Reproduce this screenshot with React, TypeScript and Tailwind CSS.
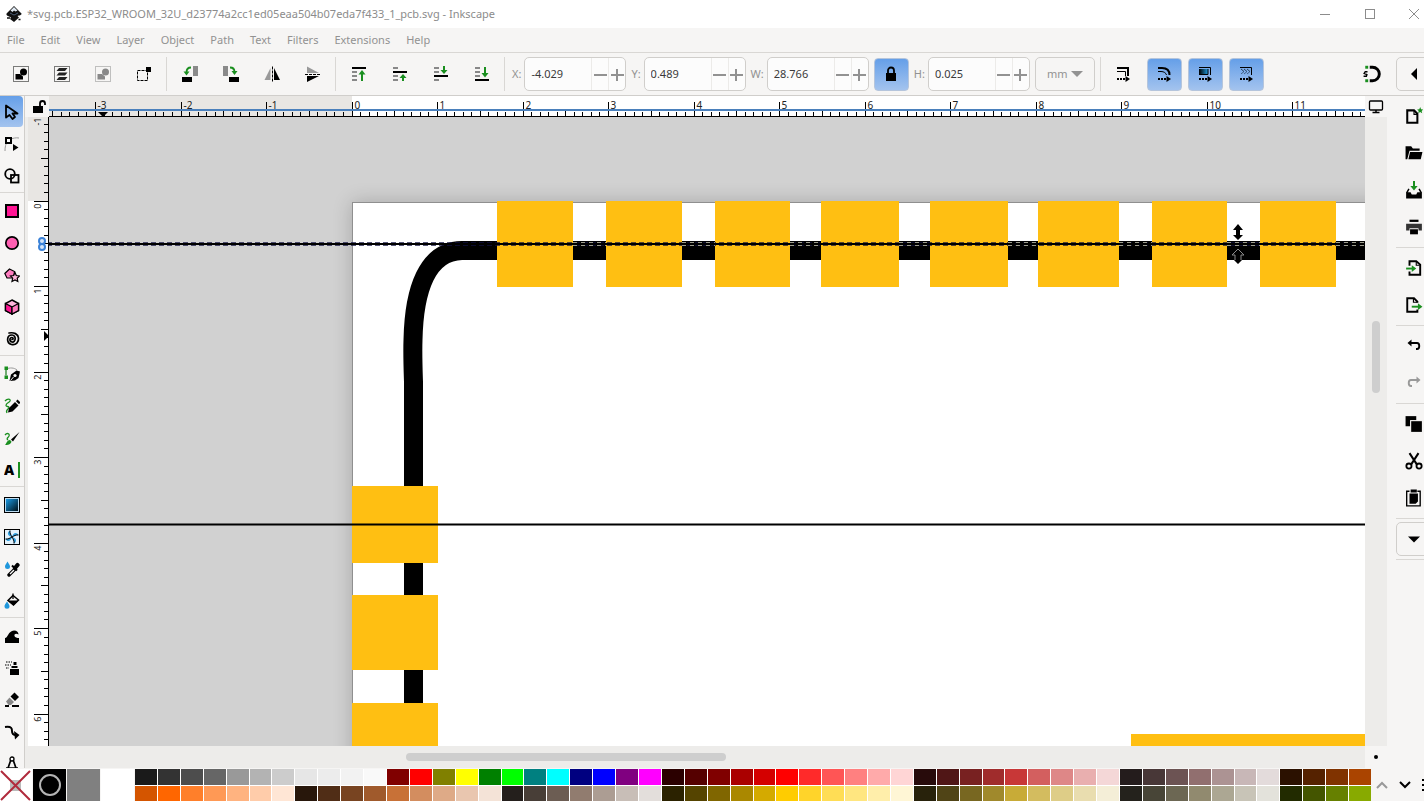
import type { ReactNode } from "react";
import clsx from "clsx";

const GREEN = "#1a8f1f";

function Icon({ children, size = 16 }: { children: ReactNode; size?: number }) {
  return (
    <svg
      width={size}
      height={size}
      viewBox="0 0 16 16"
      fill="none"
      className="shrink-0"
      aria-hidden="true"
    >
      {children}
    </svg>
  );
}

/* ---------- toolbar icons ---------- */

const dotted = (color: string) => (
  <rect x="0.5" y="0.5" width="15" height="15" stroke={color} strokeDasharray="1 1" />
);

const selectAll = (
  <Icon>
    {dotted("#000")}
    <circle cx="10.5" cy="6" r="3.5" fill="#000" />
    <path d="M2.5 8H7L10 10.5V13.5H2.5Z" fill="#000" />
  </Icon>
);

const selectLayers = (
  <Icon>
    {dotted("#000")}
    <path d="M5 2H13.500L11 5H2.500ZM5 6.500H13.500L11 9.500H2.500ZM5 11H13.500L11 14H2.500Z" fill="#222" />
  </Icon>
);

const deselect = (
  <Icon>
    {dotted("#888")}
    <circle cx="10.5" cy="6" r="3.500" fill="#888" />
    <path d="M2.5 8H7L10 10.5V13.5H2.5Z" fill="#888" />
  </Icon>
);

const selectTouch = (
  <Icon>
    <rect x="1.500" y="4.500" width="10" height="10" stroke="#000" strokeDasharray="3 1" />
    <rect x="10" y="1" width="5" height="5" fill="#000" />
  </Icon>
);

const rotateLeft = (
  <Icon>
    <rect x="11" y="0" width="5" height="10" fill="#8a8a8a" />
    <rect x="0" y="11" width="10" height="5" fill="#000" />
    <path d="M9 1.500C6 1.500 4.500 3.500 4.500 6.500" stroke={GREEN} strokeWidth="1.800" />
    <path d="M1.500 5.500H7.500L4.500 9.500Z" fill={GREEN} />
  </Icon>
);

const rotateRight = (
  <Icon>
    <rect x="0" y="0" width="5" height="10" fill="#8a8a8a" />
    <rect x="6" y="11" width="10" height="5" fill="#000" />
    <path d="M7 1.500C10 1.500 11.500 3.500 11.500 6" stroke={GREEN} strokeWidth="1.800" />
    <path d="M8.500 5H14.500L11.500 9Z" fill={GREEN} />
  </Icon>
);

const flipH = (
  <Icon>
    <path d="M6.500 2V14H0.500Z" fill="#999" />
    <path d="M10 2V14H16Z" fill="#000" />
    <path d="M8.500 0.500V16" stroke="#000" strokeDasharray="3 1" />
  </Icon>
);

const flipV = (
  <Icon>
    <path d="M2 0.500V7H14Z" fill="#999" />
    <path d="M2 16V10H14Z" fill="#000" />
    <path d="M0 8.500H16" stroke="#000" strokeDasharray="3 1" />
  </Icon>
);

const raiseTop = (
  <Icon>
    <path d="M1 2H15" stroke="#000" strokeWidth="2" />
    <path d="M1 6H6M1 10H6M1 14H6" stroke="#888" strokeWidth="2" />
    <path d="M11 15V7" stroke={GREEN} strokeWidth="2" />
    <path d="M7.500 8.500L11 4L14.500 8.500Z" fill={GREEN} />
  </Icon>
);

const raise = (
  <Icon>
    <path d="M1 2H6M1 10H6M1 14H6" stroke="#888" strokeWidth="2" />
    <path d="M1 6H15" stroke="#000" strokeWidth="2" />
    <path d="M11 15V11" stroke={GREEN} strokeWidth="2" />
    <path d="M7.500 12L11 8L14.500 12Z" fill={GREEN} />
  </Icon>
);

const lower = (
  <Icon>
    <path d="M1 2H6M1 6H6M1 14H6" stroke="#888" strokeWidth="2" />
    <path d="M1 10H15" stroke="#000" strokeWidth="2" />
    <path d="M11 0V5" stroke={GREEN} strokeWidth="2" />
    <path d="M7.500 4L11 8L14.500 4Z" fill={GREEN} />
  </Icon>
);

const lowerBottom = (
  <Icon>
    <path d="M1 2H6M1 6H6M1 10H6" stroke="#888" strokeWidth="2" />
    <path d="M1 14H15" stroke="#000" strokeWidth="2" />
    <path d="M11 1V8" stroke={GREEN} strokeWidth="2" />
    <path d="M7.500 7L11 11.500L14.500 7Z" fill={GREEN} />
  </Icon>
);

const dottedArrow = (
  <>
    <path d="M2 13H11" stroke="#000" strokeWidth="2" strokeDasharray="2 1" />
    <path d="M10.500 10L15 13L10.500 16Z" fill="#000" />
  </>
);

const scaleStroke = (
  <Icon>
    <path d="M2 2H13V10" stroke="#000" strokeWidth="2" />
    <path d="M2 5.500H10.500V10" stroke="#000" />
    {dottedArrow}
  </Icon>
);

const scaleCorners = (
  <Icon>
    <path d="M2 2H6C11 2 13.500 5 13.500 9" stroke="#000" strokeWidth="2" />
    <path d="M2 5.500H5C8 5.500 10 7 10.500 9" stroke="#000" />
    {dottedArrow}
  </Icon>
);

const moveGradient = (
  <Icon>
    <defs>
      <linearGradient id="grad-h">
        <stop offset="0" stopColor="#000" />
        <stop offset="1" stopColor="#1d9be0" />
      </linearGradient>
    </defs>
    <rect x="2" y="3" width="9" height="5" fill="url(#grad-h)" />
    <path d="M2 1.500H13.500V9M2 8.500H11V3" stroke="#000" />
    {dottedArrow}
  </Icon>
);

const movePattern = (
  <Icon>
    <path d="M2 1.500H13.500V9" stroke="#000" />
    <path d="M3 3L6 5.500L3 8M6 3L9 5.500L6 8M9 3L12 5.500L9 8" stroke="#123" strokeDasharray="1 0.500" />
    {dottedArrow}
  </Icon>
);

const lockClosed = (
  <Icon>
    <path d="M5 7V4.500A3 3 0 0 1 11 4.500V7" stroke="#000" strokeWidth="1.800" />
    <rect x="3" y="7" width="10" height="8" fill="#000" />
  </Icon>
);

const snapMagnet = (
  <Icon size={18}>
    <path d="M6 2H8.500A6 6 0 0 1 8.500 14H6" stroke="#000" strokeWidth="2.600" />
    <rect x="2" y="0.700" width="2.600" height="2.600" fill={GREEN} />
    <rect x="2" y="12.700" width="2.600" height="2.600" fill={GREEN} />
    <path d="M4 6H2L1 7.500L3.500 8.500L3 10H0.500" stroke="#000" strokeWidth="1.200" />
  </Icon>
);

/* ---------- toolbox icons ---------- */

const selector = (
  <Icon>
    <path d="M2 1.500V13.500L5.500 11L8.500 15L11 13L8.500 9.500H13.500Z" stroke="#000" strokeWidth="1.800" strokeLinejoin="round" />
  </Icon>
);

const nodeEdit = (
  <Icon>
    <path d="M4 4C1.500 8 1 11 1 15M4 4C9 2 12 1.500 15 2" stroke="#999" />
    <rect x="2" y="2" width="5" height="5" fill="#fff" stroke="#000" strokeWidth="2" />
    <path d="M9 8L14.500 11.500L9 15Z" fill="#000" />
  </Icon>
);

const shapeBuilder = (
  <Icon>
    <circle cx="6" cy="6" r="4.800" stroke="#000" strokeWidth="1.800" />
    <rect x="7" y="7" width="7.500" height="7.500" stroke="#000" strokeWidth="1.800" />
  </Icon>
);

const rectTool = (
  <Icon>
    <rect x="2" y="2" width="12" height="12" fill="#ff1493" stroke="#000" strokeWidth="2" />
  </Icon>
);

const ellipseTool = (
  <Icon>
    <circle cx="8" cy="8" r="6.200" fill="#ff5fb2" stroke="#000" strokeWidth="1.700" />
  </Icon>
);

const starTool = (
  <Icon>
    <path d="M5.500 2L10.500 4.500L9.500 11H3L0.800 6.500Z" fill="#ff7dc0" stroke="#000" strokeWidth="1.200" />
    <path
      d="M11 5.500L12.300 8.500L15.500 9L13.200 11.200L13.800 14.500L11 13L8 14.500L8.700 11.200L6.500 9L9.700 8.500Z"
      fill="#ffb5dc"
      stroke="#000"
      strokeWidth="1.200"
    />
  </Icon>
);

const boxTool = (
  <Icon>
    <path d="M8 1L14.500 4.500V11.500L8 15L1.500 11.500V4.500Z" fill="#ffb5dc" stroke="#000" strokeWidth="1.500" />
    <path d="M1.500 4.500L8 8V15L1.500 11.500Z" fill="#ff1493" stroke="#000" strokeWidth="1.300" />
    <path d="M8 8L14.500 4.500V11.500L8 15Z" fill="#ff7dc0" stroke="#000" strokeWidth="1.300" />
  </Icon>
);

const spiralTool = (
  <Icon>
    <path
      d="M8 8.500C9.500 8.500 9.500 6.500 8 6.500C5.500 6.500 5 10.500 8 11C12 11.500 12.500 4 8 4C2.500 4 2 12 7.500 13.500C12 14.500 15 11 14.500 7C14 3 10 1 5 2"
      stroke="#000"
      strokeWidth="1.700"
      strokeLinecap="round"
    />
  </Icon>
);

const penTool = (
  <Icon>
    <path d="M2 12V3C6 1.500 10 1.500 13 4" stroke="#999" />
    <rect x="0.500" y="0.500" width="3.500" height="3.500" fill={GREEN} />
    <rect x="0.500" y="9.500" width="3.500" height="3.500" fill={GREEN} />
    <path d="M2 4V9" stroke={GREEN} />
    <path d="M5.500 15L7 8.500L12.500 4.500L16 5.500L14.500 12L11 14.500Z" fill="#000" />
    <path d="M6.500 14.500L9.500 11" stroke="#f6f5f4" />
    <circle cx="11" cy="9.500" r="1.600" fill="#f6f5f4" />
  </Icon>
);

const pencilTool = (
  <Icon>
    <path d="M1 3C3 0.500 7 0.500 6 3C5 5 2 5 2 7.500C2 9 5 8 5 9.500C5 11 1 12 3 15" stroke={GREEN} strokeWidth="1.300" />
    <path d="M4 14.500L5 10L11 4L14.500 7.500L8.500 13.500Z" fill="#000" />
    <path d="M12 3.300L13.500 1.500L16.500 4.500L15 6.300Z" fill="#000" />
  </Icon>
);

const brushTool = (
  <Icon>
    <path d="M1 5C3 2.500 6 3.500 5 6C4 8 2 8.500 4 10" stroke={GREEN} strokeWidth="1.300" />
    <path d="M1 15C2.500 14 2.500 10.500 6 10L7.500 11.500C7 14.500 3.500 15 1 15Z" fill={GREEN} />
    <path d="M7 9.500L15.500 2L9 11.500Z" fill="#000" />
  </Icon>
);

const textTool = (
  <Icon>
    <text x="0" y="13" fill="#000" fontFamily="Open Sans, sans-serif" fontWeight="800" fontSize="14">
      A
    </text>
    <path d="M15 0V16" stroke={GREEN} strokeWidth="2" />
  </Icon>
);

const gradientTool = (
  <Icon>
    <defs>
      <linearGradient id="grad-d" x1="0" y1="0" x2="1" y2="1">
        <stop offset="0" stopColor="#1a9be6" />
        <stop offset="1" stopColor="#001018" />
      </linearGradient>
    </defs>
    <rect x="0.500" y="0.500" width="15" height="15" fill="#bcdcf2" stroke="#000" />
    <rect x="2" y="2" width="12" height="12" fill="url(#grad-d)" />
  </Icon>
);

const meshTool = (
  <Icon>
    <rect x="0.500" y="0.500" width="15" height="15" fill="#e3f2fc" stroke="#000" />
    <path d="M8 8C3 7 3 3 6 1.500C6 4 7 6 8 8C9 3 13 3 14.500 6C12 6 10 7 8 8C13 9 13 13 10 14.500C10 12 9 10 8 8C7 13 3 13 1.500 10C4 10 6 9 8 8Z" fill="#2f9fdf" />
    <path d="M6 1.500C5.500 4 7 6 8 8M14.500 6C12 5.500 10 7 8 8M10 14.500C10.500 12 9 10 8 8M1.500 10C4 10.500 6 9 8 8" stroke="#000" />
  </Icon>
);

const dropperTool = (
  <Icon>
    <path d="M3.500 0.500C5 3 6 4 6 5.500A2.500 2.500 0 0 1 1 5.500C1 4 2 3 3.500 0.500Z" fill="#1f97dc" />
    <path d="M5 14L11 8" stroke="#000" strokeWidth="3.400" strokeLinecap="round" />
    <path d="M6 13L10 9" stroke="#fff" strokeWidth="1.200" />
    <path d="M8 4.500L13 9.500" stroke="#000" strokeWidth="2" />
    <path d="M11 7L13.500 4" stroke="#000" strokeWidth="4.200" strokeLinecap="round" />
  </Icon>
);

const bucketTool = (
  <Icon>
    <path d="M3 8.500C4.500 11 5.500 12 5.500 13.200A2.500 2.500 0 0 1 0.500 13.200C0.500 12 1.500 11 3 8.500Z" fill="#1f97dc" />
    <path d="M4 7.500L9 2.500L14.500 7L9.500 12Z" stroke="#000" strokeWidth="1.500" />
    <path d="M4 7.500H14.500L9.500 12.500Z" fill="#000" />
    <path d="M9 6V0.500" stroke="#000" strokeWidth="1.300" />
  </Icon>
);

const tweakTool = (
  <Icon>
    <path d="M1 15V10C4 10 4 3 10 2.500C13 2.500 14.500 4.500 14.500 6.500C12.500 5 10 5.500 10.500 8C11 9.500 13 10 15 10V15Z" fill="#000" />
  </Icon>
);

const sprayTool = (
  <Icon>
    <path d="M2 2H8M1 5H7M2 8H5" stroke="#777" strokeWidth="2" strokeDasharray="1.500 1" />
    <path d="M6 9H15V15H6Z" fill="#000" />
    <path d="M7.500 6H13.500V8H7.500ZM9.500 2H12.500V5H9.500Z" fill="#000" />
  </Icon>
);

const eraserTool = (
  <Icon>
    <path d="M6.500 4.500L10.500 0.500L15 5L11 9Z" fill="#000" />
    <path d="M5.500 5.500L10 10L7 13H4.500L2 9.500Z" fill="#888" />
    <path d="M1 14H5M8 14H15" stroke="#000" strokeWidth="2" />
  </Icon>
);

const connectorTool = (
  <Icon>
    <path d="M1 3C8 2 8 5 8 7C8 10 9 11 12 11" stroke="#000" strokeWidth="2" />
    <path d="M10 7L15.500 11L11 15.500Z" fill="#000" />
  </Icon>
);

const measureTool = (
  <Icon>
    <path d="M3 15L7 3.500H9L13 15M2 12H14" stroke="#000" strokeWidth="1.700" />
    <circle cx="8" cy="3" r="2" fill="#fff" stroke="#000" strokeWidth="1.300" />
  </Icon>
);

/* ---------- command bar icons ---------- */

const docNew = (
  <Icon size={18}>
    <path d="M2 3H8L11 6V14H2Z" stroke="#000" strokeWidth="1.800" />
    <path d="M8 3V6.500H11" stroke="#000" />
    <path d="M13.500 0L14.300 2L16.300 2.200L14.800 3.600L15.300 5.600L13.500 4.500L11.700 5.600L12.200 3.600L10.700 2.200L12.700 2Z" fill={GREEN} />
  </Icon>
);

const docOpen = (
  <Icon size={18}>
    <path d="M0.500 2H5.500L7 4H13V6H4L2 13.500H0.500Z" fill="#000" />
    <path d="M4.500 7H15.500L14 13.500H3Z" fill="#000" />
  </Icon>
);

const docSave = (
  <Icon size={18}>
    <path d="M8 0V5" stroke={GREEN} strokeWidth="1.800" />
    <path d="M4.800 4.500H11.200L8 8.500Z" fill={GREEN} />
    <path d="M3.500 7L1.500 10.500M12.500 7L14.500 10.500" stroke="#000" strokeWidth="1.300" />
    <path d="M1 10H5L6 12H10L11 10H15V15.500H1Z" fill="#000" />
  </Icon>
);

const docPrint = (
  <Icon size={18}>
    <path d="M4 1.500H12V3.500H4Z" fill="#000" />
    <path d="M1 5H15V11H12V9H4V11H1Z" fill="#333" />
    <path d="M4.500 10H11.500V14.500H4.500Z" fill="#000" />
  </Icon>
);

const docImport = (
  <Icon size={18}>
    <path d="M4 6V2H10L13.500 5V14H4V11" stroke="#000" strokeWidth="1.700" />
    <path d="M10 2V5.500H13" stroke="#000" />
    <path d="M1 8.500H7" stroke={GREEN} strokeWidth="1.700" />
    <path d="M6 5.500L10 8.500L6 11.500Z" fill={GREEN} />
  </Icon>
);

const docExport = (
  <Icon size={18}>
    <path d="M11 6V5L8 2H2V14H11V12" stroke="#000" strokeWidth="1.700" />
    <path d="M7.500 2V5.500H11" stroke="#000" />
    <path d="M6 9.500H12" stroke={GREEN} strokeWidth="1.700" />
    <path d="M11.500 6.500L15.500 9.500L11.500 12.500Z" fill={GREEN} />
  </Icon>
);

const undo = (
  <Icon>
    <path d="M4 5H11C14 5 14 11 11 11H10" stroke="#000" strokeWidth="1.900" />
    <path d="M5.500 1.500V8.500L1.500 5Z" fill="#000" />
  </Icon>
);

const redo = (
  <Icon>
    <path d="M12 5H5C2 5 2 11 5 11H6" stroke="#999" strokeWidth="1.900" />
    <path d="M10.500 1.500V8.500L14.500 5Z" fill="#999" />
  </Icon>
);

const copy = (
  <Icon size={18}>
    <path d="M0.500 1H10V10H0.500Z" fill="#000" />
    <rect x="5" y="5" width="10.500" height="10.500" fill="#000" stroke="#f6f5f4" />
  </Icon>
);

const cut = (
  <Icon size={18}>
    <path d="M4 1L10.500 11M12 1L5.500 11" stroke="#000" strokeWidth="1.800" />
    <circle cx="3.500" cy="12.500" r="2.300" stroke="#000" strokeWidth="1.600" />
    <circle cx="12.500" cy="12.500" r="2.300" stroke="#000" strokeWidth="1.600" />
  </Icon>
);

const paste = (
  <Icon size={18}>
    <path d="M4 2H1.500V15H13.500V2H11" stroke="#000" strokeWidth="1.200" />
    <path d="M5 0.500H10.500V3H5ZM4 4H11.500V11L9.500 13H4Z" fill="#000" />
  </Icon>
);

const caretDown = (
  <Icon>
    <path d="M2 5.500H14L8 11.500Z" fill="#000" />
  </Icon>
);

/* ---------- data ---------- */

const menus = ["File", "Edit", "View", "Layer", "Object", "Path", "Text", "Filters", "Extensions", "Help"];

type Item = { label: string; icon: ReactNode; active?: boolean };

const selectGroups: Item[][] = [
  [
    { label: "Select all", icon: selectAll },
    { label: "Select all in all layers", icon: selectLayers },
    { label: "Deselect", icon: deselect },
    { label: "Touch selection", icon: selectTouch },
  ],
  [
    { label: "Rotate left", icon: rotateLeft },
    { label: "Rotate right", icon: rotateRight },
    { label: "Flip horizontal", icon: flipH },
    { label: "Flip vertical", icon: flipV },
  ],
  [
    { label: "Raise to top", icon: raiseTop },
    { label: "Raise", icon: raise },
    { label: "Lower", icon: lower },
    { label: "Lower to bottom", icon: lowerBottom },
  ],
];

const scaleOptions: Item[] = [
  { label: "Scale stroke width", icon: scaleStroke },
  { label: "Scale rounded corners", icon: scaleCorners, active: true },
  { label: "Move gradients", icon: moveGradient, active: true },
  { label: "Move patterns", icon: movePattern, active: true },
];

const toolGroups: Item[][] = [
  [
    { label: "Selector", icon: selector, active: true },
    { label: "Node", icon: nodeEdit },
    { label: "Shape builder", icon: shapeBuilder },
  ],
  [
    { label: "Rectangle", icon: rectTool },
    { label: "Ellipse", icon: ellipseTool },
    { label: "Star", icon: starTool },
    { label: "3D box", icon: boxTool },
    { label: "Spiral", icon: spiralTool },
  ],
  [
    { label: "Pen", icon: penTool },
    { label: "Pencil", icon: pencilTool },
    { label: "Calligraphy", icon: brushTool },
    { label: "Text", icon: textTool },
  ],
  [
    { label: "Gradient", icon: gradientTool },
    { label: "Mesh", icon: meshTool },
    { label: "Dropper", icon: dropperTool },
    { label: "Paint bucket", icon: bucketTool },
  ],
  [
    { label: "Tweak", icon: tweakTool },
    { label: "Spray", icon: sprayTool },
    { label: "Eraser", icon: eraserTool },
    { label: "Connector", icon: connectorTool },
    { label: "Measure", icon: measureTool },
  ],
];

const commandGroups: Item[][] = [
  [
    { label: "New", icon: docNew },
    { label: "Open", icon: docOpen },
    { label: "Save", icon: docSave },
    { label: "Print", icon: docPrint },
  ],
  [
    { label: "Import", icon: docImport },
    { label: "Export", icon: docExport },
  ],
  [
    { label: "Undo", icon: undo },
    { label: "Redo", icon: redo },
  ],
  [
    { label: "Copy", icon: copy },
    { label: "Cut", icon: cut },
    { label: "Paste", icon: paste },
  ],
];

const swatches = [
  "#1a1a1a #333333 #4d4d4d #666666 #999999 #b3b3b3 #cccccc #e6e6e6 #ececec #f2f2f2 #f9f9f9",
  "#800000 #ff0000 #808000 #ffff00 #008000 #00ff00 #008080 #00ffff #000080 #0000ff #800080 #ff00ff",
  "#2b0000 #550000 #800000 #aa0000 #d40000 #ff0000 #ff2a2a #ff5555 #ff8080 #ffaaaa #ffd5d5",
  "#280b0b #501616 #782121 #a02c2c #c83737 #d35f5f #de8787 #e9afaf #f4d7d7",
  "#241c1c #483737 #6c5353 #916f6f #ac9393 #c8b7b7 #e3dbdb",
  "#2b1100 #552200 #803300 #aa4400 #d45500 #ff6600 #ff7f2a #ff9955 #ffb380 #ffccaa #ffe6d5",
  "#28170b #502d16 #784421 #a05a2c #c87137 #d38d5f #deaa87 #e9c6af #f4e3d7",
  "#241f1c #483e37 #6c5d53 #917c6f #ac9d93 #c8beb7 #e3dedb",
  "#2b2200 #554400 #806600 #aa8800 #d4aa00 #ffcc00 #ffd42a #ffdd55 #ffe680 #ffeeaa #fff6d5",
  "#28220b #504416 #786721 #a0892c #c8ab37 #d3bc5f #decd87 #e9ddaf #f4eed7",
  "#24221c #484537 #6c6753 #918a6f #aca793 #c8c4b7 #e3e2db",
  "#222b00 #445500 #668000 #88aa00",
]
  .join(" ")
  .split(" ");

/* ---------- title bar and menus ---------- */

function TitleBar() {
  return (
    <header className="flex h-7 shrink-0 items-center bg-white pl-[6px] text-[#8c8c8c]">
      <svg width="16" height="18" viewBox="0 0 16 18" aria-hidden="true">
        <path d="M8 1L15.500 8.500C16 10 13 10.500 11.500 11L13 12.500L8 17L4 14L5 12.500L1 10.500C0 9.500 0.500 8.500 1 8Z" fill="#111" />
        <path d="M8 2L11.500 5.500L9.500 6.500L8 5.500L6.500 7L4.500 5.500Z" fill="#dfe8f2" />
        <path d="M4 8L8 10L12 8" stroke="#4a5b74" />
        <path d="M1 13H4M12.500 14.500H14.500" stroke="#111" strokeWidth="1.500" />
      </svg>
      <h1 className="ml-[5px]">*svg.pcb.ESP32_WROOM_32U_d23774a2cc1ed05eaa504b07eda7f433_1_pcb.svg - Inkscape</h1>
      <div className="ml-auto flex items-center">
        <button aria-label="Minimize" className="flex h-7 w-[45px] items-center justify-center">
          <svg width="10" height="10" stroke="#8c8c8c" fill="none">
            <path d="M0 5.500H10" />
          </svg>
        </button>
        <button aria-label="Maximize" className="flex h-7 w-[45px] items-center justify-center">
          <svg width="10" height="10" stroke="#8c8c8c" fill="none">
            <rect x="0.500" y="0.500" width="9" height="9" />
          </svg>
        </button>
        <button aria-label="Close" className="flex h-7 w-8 items-center justify-center pl-3">
          <svg width="10" height="10" stroke="#8c8c8c" fill="none">
            <path d="M0 0L10 10M10 0L0 10" />
          </svg>
        </button>
      </div>
    </header>
  );
}

function MenuBar() {
  return (
    <nav className="flex h-[25px] shrink-0 items-center gap-4 border-b border-[#d9d7d4] pt-px pl-[7px] text-[#929292]">
      {menus.map((m) => (
        <button key={m}>{m}</button>
      ))}
    </nav>
  );
}

/* ---------- tool controls ---------- */

function ToolButton({ item }: { item: Item }) {
  return (
    <button
      aria-label={item.label}
      className={clsx(
        "flex h-[33px] w-[35px] shrink-0 items-center justify-center rounded",
        item.active && "border border-[#b5c5dc] bg-linear-to-b from-[#659fe8] to-[#a3c3ee]",
      )}
    >
      {item.icon}
    </button>
  );
}

function Separator() {
  return <div className="h-[34px] w-px shrink-0 bg-[#d9d7d4]" />;
}

function SpinBox({ id, label, value }: { id: string; label: string; value: string }) {
  return (
    <div className="flex items-center gap-[3px]">
      <label htmlFor={id} className="text-[#929292]">
        {label}
      </label>
      <div className="flex h-[34px] w-[102px] overflow-hidden rounded-[5px] border border-[#d0cecb] bg-[#fcfcfc]">
        <input
          id={id}
          defaultValue={value}
          className="w-0 min-w-0 flex-1 bg-transparent pl-[6px] text-[#3a3a3a] outline-none"
        />
        <button aria-label={`Decrease ${label}`} className="flex w-[17px] items-center justify-center border-l border-[#ecebe9]">
          <svg width="13" height="13" stroke="#929292" strokeWidth="2">
            <path d="M0 7H13" />
          </svg>
        </button>
        <button aria-label={`Increase ${label}`} className="flex w-[17px] items-center justify-center border-l border-[#ecebe9]">
          <svg width="13" height="13" stroke="#929292" strokeWidth="2">
            <path d="M0 7H13M6 1V13" />
          </svg>
        </button>
      </div>
    </div>
  );
}

function ToolControls() {
  return (
    <div className="flex h-[43px] shrink-0 items-center overflow-hidden border-b border-[#d0cecb] pl-[3px]">
      <div className="flex items-center gap-[5px]">
        {selectGroups.map((group, i) => (
          <div key={i} className="flex items-center gap-[5px]">
            <div className="flex gap-[6px]">
              {group.map((item) => (
                <ToolButton key={item.label} item={item} />
              ))}
            </div>
            <Separator />
          </div>
        ))}
        <div className="flex items-center gap-[5px] pl-[2px]">
          <SpinBox id="pos-x" label="X:" value="-4.029" />
          <SpinBox id="pos-y" label="Y:" value="0.489" />
          <SpinBox id="size-w" label="W:" value="28.766" />
          <ToolButton item={{ label: "Lock width and height", icon: lockClosed, active: true }} />
          <SpinBox id="size-h" label="H:" value="0.025" />
        </div>
        <div className="relative">
          <select
            aria-label="Unit"
            className="h-[34px] w-[60px] appearance-none rounded-[5px] border border-[#d0cecb] pl-[11px] text-[#929292]"
          >
            <option>mm</option>
            <option>px</option>
          </select>
          <svg width="12" height="6" className="pointer-events-none absolute top-[14px] right-3" fill="#929292">
            <path d="M0 0H12L6 6Z" />
          </svg>
        </div>
        <Separator />
        <div className="flex gap-[6px]">
          {scaleOptions.map((item) => (
            <ToolButton key={item.label} item={item} />
          ))}
        </div>
      </div>
      <div className="ml-auto flex w-[70px] shrink-0 items-center gap-[7px]">
        <ToolButton item={{ label: "Snapping", icon: snapMagnet }} />
        <button
          aria-label="Show snap options"
          className="flex h-[34px] w-9 shrink-0 items-center justify-center rounded-[5px] border border-[#d0cecb]"
        >
          <Icon>
            <path d="M11 2V14L5 8Z" fill="#000" />
          </Icon>
        </button>
      </div>
    </div>
  );
}

function Toolbox() {
  return (
    <aside className="flex w-[25px] shrink-0 flex-col gap-px overflow-hidden border-r border-[#d0cecb]">
      {toolGroups.map((group, i) => (
        <div key={i} className="flex shrink-0 flex-col gap-px">
          {i > 0 && <div className="h-[2px] w-full border-t border-[#d9d7d4]" />}
          {group.map((item) => (
            <button
              key={item.label}
              aria-label={item.label}
              className={clsx(
                "flex h-[31px] w-[23px] shrink-0 items-center justify-center rounded-r",
                item.active && "bg-linear-to-b from-[#659fe8] to-[#a3c3ee]",
              )}
            >
              {item.icon}
            </button>
          ))}
        </div>
      ))}
    </aside>
  );
}

function CommandBar() {
  return (
    <aside className="flex w-[37px] shrink-0 flex-col gap-[3px] overflow-hidden pt-[3px] pl-[9px]">
      {commandGroups.map((group, i) => (
        <div key={i} className="flex flex-col gap-[3px]">
          {group.map((item) => (
            <button
              key={item.label}
              aria-label={item.label}
              className="flex h-[34px] w-9 shrink-0 items-center justify-center"
            >
              {item.icon}
            </button>
          ))}
          <div className="h-px w-9 bg-[#d9d7d4]" />
        </div>
      ))}
      <button
        aria-label="More commands"
        className="flex h-[34px] w-9 shrink-0 items-center justify-center rounded-[5px] border border-[#d0cecb]"
      >
        {caretDown}
      </button>
      <div className="h-px w-9 bg-[#d9d7d4]" />
    </aside>
  );
}

/* ---------- rulers ---------- */

const STEP = 85.5;
const ORIGIN_X = 303;
const ORIGIN_Y = 84;

function ticks(origin: number, from: number, to: number) {
  const out: { pos: number; n: number }[] = [];
  for (let n = from; n <= to; n++) {
    out.push({ pos: Math.floor(origin + (n * STEP) / 10) + 0.5, n });
  }
  return out;
}

function HorizontalRuler() {
  return (
    <svg className="h-full w-full bg-white" fontFamily="Noto Sans, sans-serif" fontSize="10">
      <rect width={ORIGIN_X} height="21" fill="#e8e6e3" />
      {ticks(ORIGIN_X, -35, 300).map(({ pos, n }) => (
        <g key={n}>
          <path d={`M${pos} ${n % 10 === 0 ? 6 : n % 5 === 0 ? 13 : 16}V21`} stroke="#000" />
          {n % 10 === 0 && n <= 110 && (
            <text x={pos + 2} y="13" fill="#222">
              {n / 10}
            </text>
          )}
        </g>
      ))}
      <rect y="13" width="100%" height="2" fill="#4a80bc" />
      <rect y="20" width="100%" height="1" fill="#000" />
      <path d="M49 16H59L54 21Z" fill="#000" />
    </svg>
  );
}

function VerticalRuler() {
  return (
    <svg className="h-full w-full bg-white" fontFamily="Noto Sans, sans-serif" fontSize="9">
      <rect width="24" height={ORIGIN_Y} fill="#e8e6e3" />
      <rect width="3" height="100%" fill="#efeeec" />
      {ticks(ORIGIN_Y, -10, 200).map(({ pos, n }) => (
        <g key={n}>
          <path d={`M${n % 10 === 0 ? 9 : n % 5 === 0 ? 16 : 19} ${pos}H24`} stroke="#000" />
          {n % 10 === 0 && n <= 60 && (
            <text transform={`translate(16 ${pos + 2}) rotate(-90)`} textAnchor="end" fill="#222">
              {n / 10}
            </text>
          )}
        </g>
      ))}
      <rect x="23" width="1" height="100%" fill="#000" />
      <path d="M19 214V224L24 219Z" fill="#000" />
      <g stroke="#3b82d8" strokeWidth="2" fill="#d6e6fa">
        <circle cx="17" cy="124" r="3" />
        <circle cx="17" cy="130" r="3" />
      </g>
    </svg>
  );
}

/* ---------- drawing ---------- */

const topPads = [
  [145, 76],
  [254, 76],
  [363, 75],
  [469, 78],
  [578, 78],
  [686, 81],
  [800, 75],
  [908, 76],
];

const leftPads = [
  [284, 77],
  [393, 75],
  [501, 76],
];

function Canvas() {
  return (
    <svg className="h-full w-full bg-[#d1d1d1]">
      <defs>
        <filter id="page-shadow" x="-10%" y="-10%" width="120%" height="120%">
          <feGaussianBlur stdDeviation="10" />
        </filter>
      </defs>
      <g transform="translate(303 85)">
        <rect x="0" y="0" width="2460" height="1800" fill="#000" opacity="0.2" filter="url(#page-shadow)" />
        <rect x="0.500" y="0.500" width="2450" height="1800" fill="#fff" stroke="#8f8f8f" />
        <path
          d="M61.500 1200V180C61 165 60.500 152 61 138C62 88 75 49 110 48.500H2000"
          fill="none"
          stroke="#000"
          strokeWidth="19"
        />
        <g fill="#ffbf12">
          {topPads.map(([x, w]) => (
            <rect key={x} x={x} y="-1" width={w} height="86" />
          ))}
          {leftPads.map(([y, h]) => (
            <rect key={y} x="0" y={y} width="86" height={h} />
          ))}
          <rect x="779" y="532" width="400" height="100" />
        </g>
        <path d="M-345 322.500H2400" stroke="#000" strokeWidth="2" />
        {/* selected hairline with its bounding box cue */}
        <path d="M-345 42H2400" stroke="#000" strokeWidth="2" />
        <path d="M-345 40.500H2400M-345 43.500H2400" stroke="#101040" strokeDasharray="5 3" opacity="0.7" />
        {topPads.map(([x, w], i) => {
          const next = topPads[i + 1]?.[0] ?? 1300;
          return (
            <path
              key={x}
              d={`M${x + w} 40.500H${next}M${x + w} 43.500H${next}`}
              stroke="#9c9c8c"
              strokeDasharray="4 4"
            />
          );
        })}
        {/* transform handles */}
        <path d="M886 22L891 28H888V33H891L886 38L881 33H884V28H881Z" fill="#000" />
        <path d="M886 47L892 53H889V56H892L886 62L880 56H883V53H880Z" fill="#000" />
        <path d="M883 58V53H880L886 47L892 53H889V58" fill="none" stroke="#8a8a8a" />
      </g>
    </svg>
  );
}

function Workspace() {
  return (
    <main className="grid min-w-0 flex-1 grid-cols-[24px_minmax(0,1fr)_22px] grid-rows-[21px_minmax(0,1fr)_22px]">
      <button aria-label="Lock guides" className="flex items-center justify-center pl-1">
        <Icon>
          <path d="M9 7V4.500A2.500 2.500 0 0 1 14 4.500V6" stroke="#000" strokeWidth="1.800" />
          <rect x="2" y="7" width="10" height="7" fill="#000" />
        </Icon>
      </button>
      <HorizontalRuler />
      <button aria-label="Display mode" className="flex items-center justify-center">
        <Icon>
          <rect x="1.500" y="2" width="13" height="9" rx="1" stroke="#000" strokeWidth="1.300" />
          <path d="M8 11V13M4.500 13.500H11.500" stroke="#000" strokeWidth="1.500" />
        </Icon>
      </button>
      <VerticalRuler />
      <Canvas />
      <div className="flex justify-center bg-[#edecea]">
        <div className="mt-[204px] h-[72px] w-2 rounded-full bg-[#cecece]" />
      </div>
      <div className="bg-[#edecea]" />
      <div className="flex items-center bg-[#edecea]">
        <div className="ml-[357px] h-2 w-[320px] rounded-full bg-[#cecece]" />
      </div>
      <div className="flex items-center justify-center">
        <div className="size-1 rounded-full bg-black" />
      </div>
    </main>
  );
}

function Palette() {
  return (
    <footer className="mt-px flex h-8 shrink-0 gap-px overflow-hidden">
      <button aria-label="No color" className="w-8 bg-white">
        <svg width="32" height="32">
          <rect x="10" y="11" width="11" height="11" fill="#bbb" />
          <path d="M1 2L30 31M30 2L1 31" stroke="#b02a3c" strokeWidth="2" />
        </svg>
      </button>
      <button aria-label="Black" className="flex w-[33px] items-center justify-center bg-black">
        <div className="size-[22px] rounded-full border-2 border-[#b5b5b5]" />
      </button>
      <button aria-label="Gray" className="w-[33px] bg-[#808080]" />
      <button aria-label="White" className="w-[33px] bg-white" />
      <div className="grid flex-1 grid-cols-[repeat(54,minmax(0,1fr))] grid-rows-2 gap-px bg-white">
        {swatches.map((color, i) => (
          <button key={i} aria-label={color} style={{ backgroundColor: color }} />
        ))}
      </div>
      <div className="flex w-[52px] items-center gap-[11px] pl-1">
        <button aria-label="Scroll up">
          <svg width="12" height="8" fill="none" stroke="#999" strokeWidth="2">
            <path d="M1 7L6 2L11 7" />
          </svg>
        </button>
        <button aria-label="Scroll down">
          <svg width="12" height="8" fill="none" stroke="#000" strokeWidth="2">
            <path d="M1 1L6 6L11 1" />
          </svg>
        </button>
        <button aria-label="Palette menu" className="shrink-0">
          <svg width="12" height="12" stroke="#000" strokeWidth="2">
            <path d="M0 1H12M0 6H12M0 11H12" />
          </svg>
        </button>
      </div>
    </footer>
  );
}

export default function App() {
  return (
    <div className="flex h-screen flex-col overflow-hidden bg-[#f6f5f4] font-['Noto_Sans',sans-serif] text-[11px] text-black">
      <TitleBar />
      <MenuBar />
      <ToolControls />
      <div className="flex min-h-0 flex-1">
        <Toolbox />
        <Workspace />
        <CommandBar />
      </div>
      <Palette />
    </div>
  );
}
